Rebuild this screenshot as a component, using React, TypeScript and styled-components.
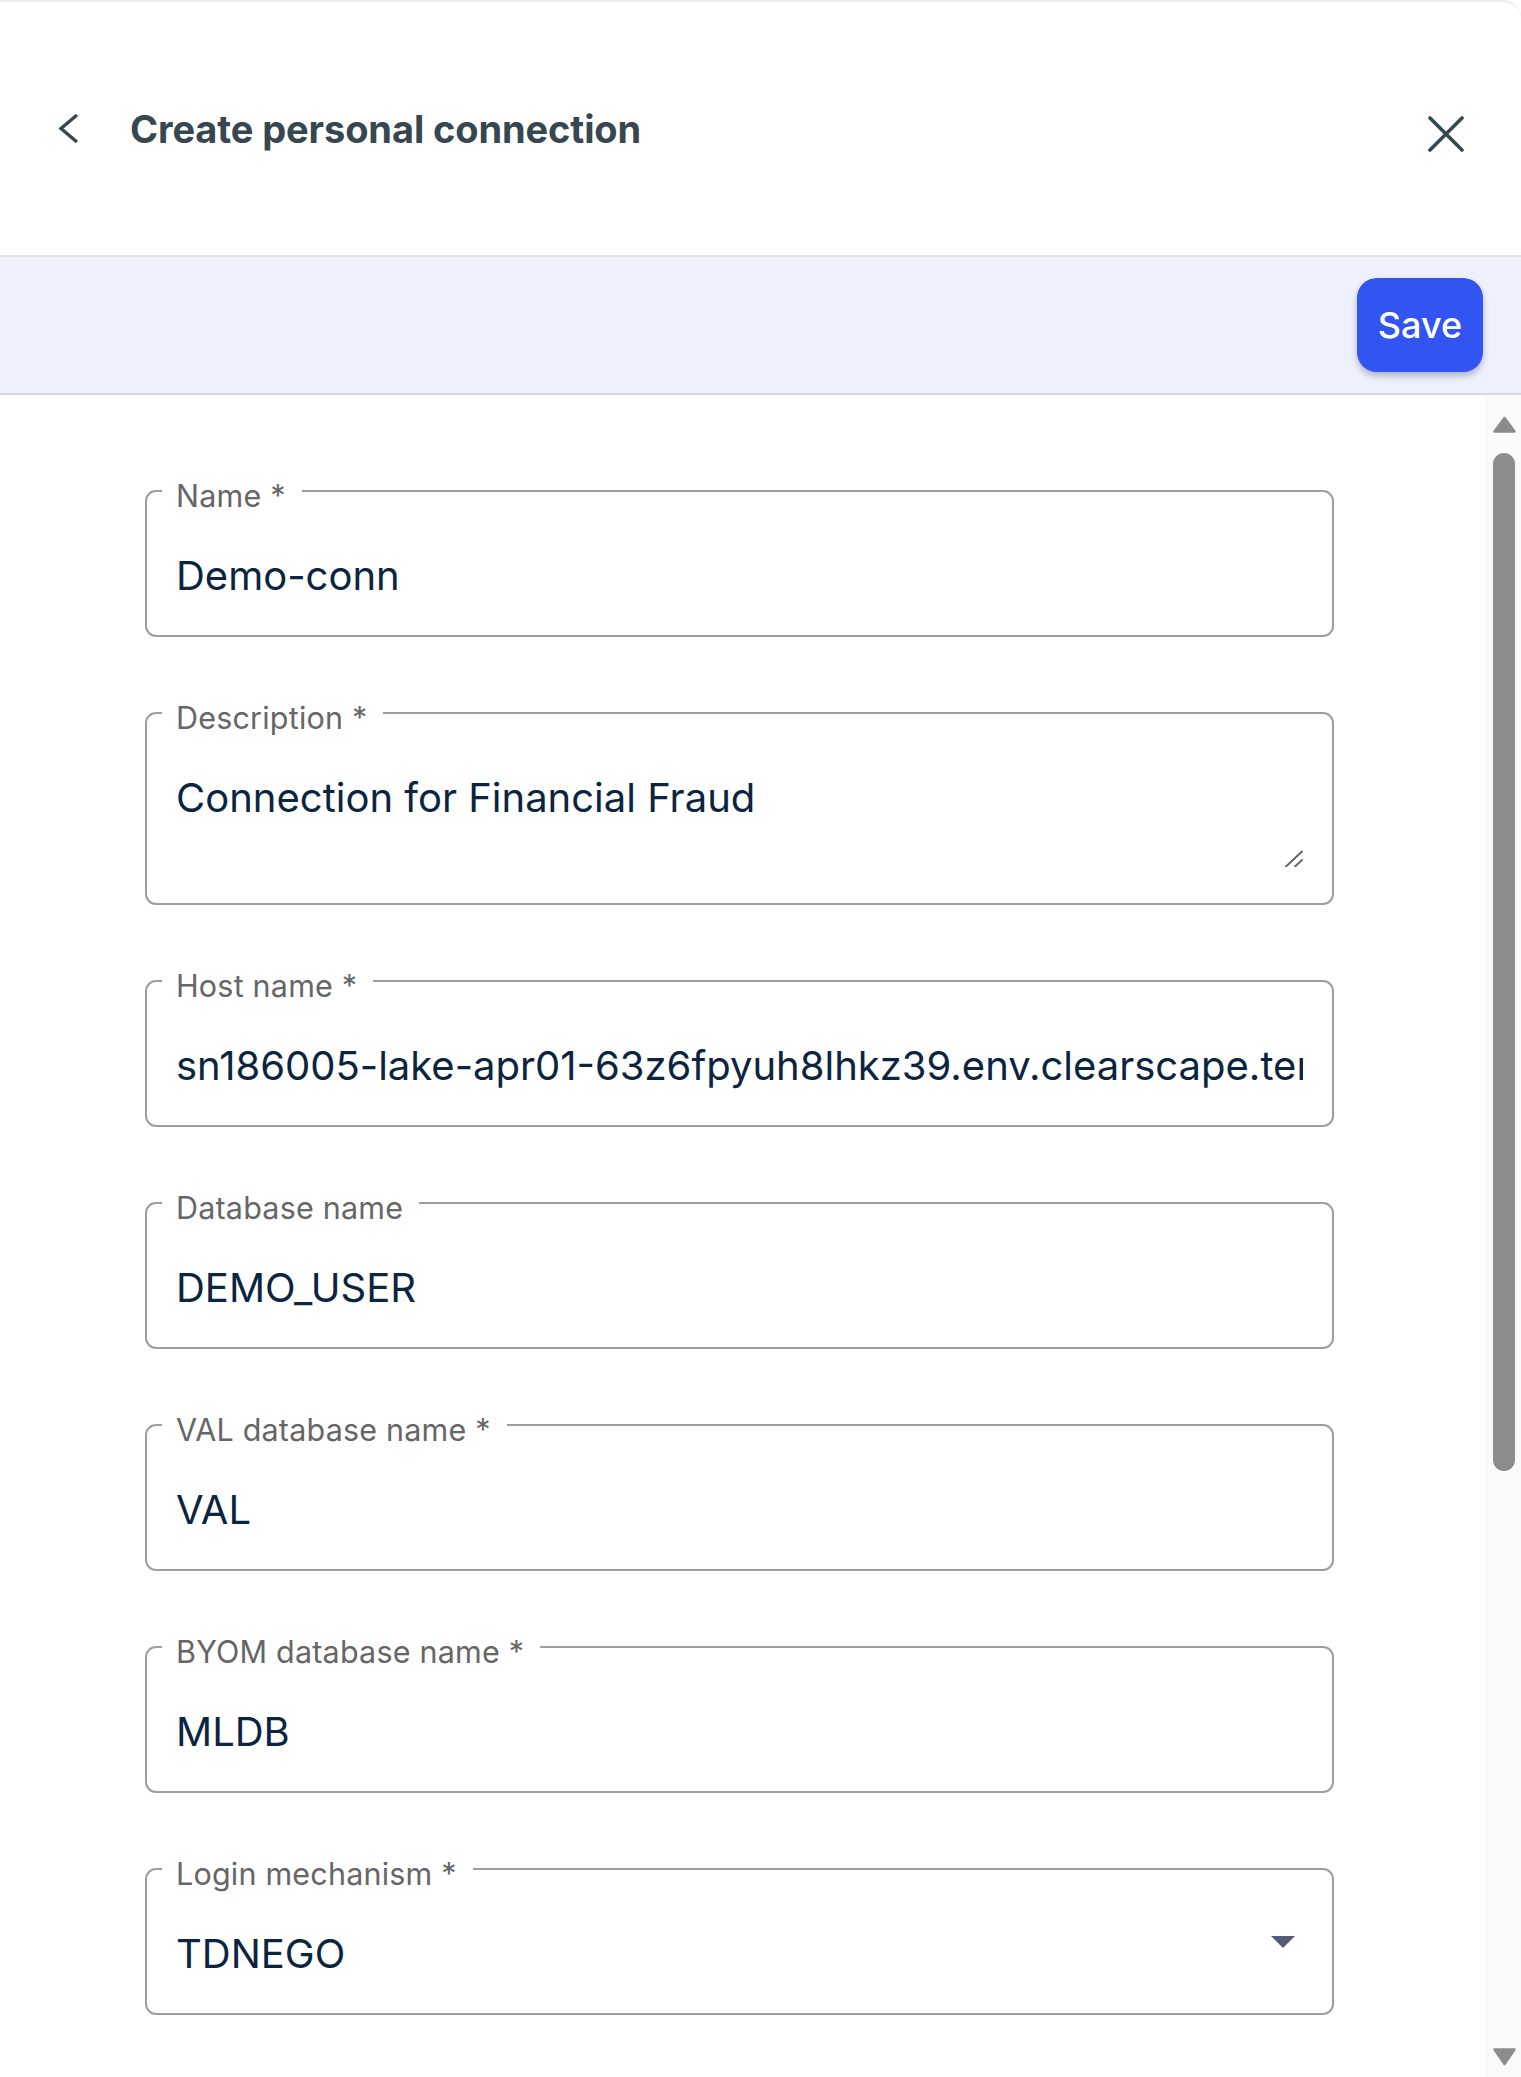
import React from "react";
import styled, { createGlobalStyle } from "styled-components";

const GlobalStyle = createGlobalStyle`
  html, body {
    margin: 0;
    padding: 0;
    background: #ffffff;
    overflow: hidden;
  }
  body {
    font-family: Inter, "Noto Sans", "Liberation Sans", sans-serif;
  }
  * { box-sizing: border-box; }
`;

const Page = styled.div`
  height: 100vh;
  display: flex;
  flex-direction: column;
  border-top: 2px solid #ebebeb;
  border-top-right-radius: 18px;
  background: #ffffff;
  overflow: hidden;
`;

const Header = styled.header`
  height: 255px;
  flex: none;
  display: flex;
  align-items: center;
  padding: 0 57px 0 58px;
  border-bottom: 2px solid #e2e2e2;
`;

const IconButton = styled.button<{ $offsetTop?: number }>`
  border: none;
  background: transparent;
  padding: 0;
  margin: ${(p) => (p.$offsetTop ? `${p.$offsetTop}px 0 0 0` : "0")};
  display: flex;
  align-items: center;
  justify-content: center;
  color: #37474f;
  cursor: pointer;
`;

const Title = styled.h1`
  margin: 0 0 0 50px;
  font-size: 38px;
  font-weight: 700;
  letter-spacing: -0.1px;
  color: #37474f;
  line-height: 1;
  flex: 1;
`;

const ActionBar = styled.div`
  height: 138px;
  flex: none;
  display: flex;
  align-items: center;
  justify-content: flex-end;
  padding: 0 38px;
  background: #eef0fc;
  border-bottom: 2px solid #d5d7e4;
`;

const SaveButton = styled.button`
  width: 126px;
  height: 94px;
  border: none;
  border-radius: 20px;
  background: #3254f1;
  color: #ffffff;
  font-family: Inter, "Noto Sans", sans-serif;
  font-size: 36px;
  font-weight: 500;
  box-shadow: 0 4px 6px rgba(30, 40, 90, 0.3);
  cursor: pointer;
`;

const Body = styled.div`
  flex: 1;
  min-height: 0;
  display: flex;
`;

const FormArea = styled.main`
  flex: 1;
  min-width: 0;
  overflow: hidden;
  padding: 76px 0 0 145px;
`;

const Form = styled.form`
  width: 1189px;
  display: flex;
  flex-direction: column;
  gap: 56px;
`;

const FieldSet = styled.fieldset`
  margin: 0;
  padding: 0 15px;
  border: 2px solid #9e9e9e;
  border-radius: 11px;
  min-width: 0;
`;

const Legend = styled.legend`
  padding: 10px 16px 0 14px;
  font-size: 30.5px;
  line-height: 30px;
  color: #666666;
  letter-spacing: 0.2px;
`;

const ValueBox = styled.div<{ $bottom: number }>`
  padding: 35px 14px ${(p) => p.$bottom}px;
  display: flex;
  flex-direction: column;
`;

const ValueRow = styled.div`
  display: flex;
  align-items: center;
  gap: 16px;
`;

const ValueText = styled.div`
  flex: 1;
  min-width: 0;
  font-size: 40px;
  line-height: 60px;
  color: #0b2540;
  white-space: nowrap;
  overflow: hidden;
`;

const GripRow = styled.div`
  display: flex;
  justify-content: flex-end;
  margin-top: 22px;
  height: 17px;
`;

const SelectArrow = styled.svg`
  flex: none;
  margin: 0 8px 24px 0;
`;

const ScrollTrack = styled.div`
  width: 36px;
  flex: none;
  background: #fafafa;
  display: flex;
  flex-direction: column;
  padding: 21px 5px 11px 8px;
`;

const Thumb = styled.div`
  width: 22px;
  height: 1018px;
  margin-top: 20px;
  border-radius: 11px;
  background: #8c8c8c;
`;

const TrackFill = styled.div`
  flex: 1;
`;

type FieldProps = {
  label: string;
  value: string;
  multiline?: boolean;
  select?: boolean;
};

const Field = ({ label, value, multiline, select }: FieldProps) => (
  <FieldSet>
    <Legend>{label}</Legend>
    <ValueBox $bottom={multiline ? 36 : 29}>
      <ValueRow>
        <ValueText>{value}</ValueText>
        {select && (
          <SelectArrow width="24" height="12" viewBox="0 0 24 12">
            <path d="M0 0 H24 L12 12 Z" fill="#545b74" />
          </SelectArrow>
        )}
      </ValueRow>
      {multiline && (
        <GripRow>
          <svg width="18" height="17" viewBox="0 0 18 17">
            <path d="M1 16.5 L17 1.5" stroke="#666" strokeWidth="2" strokeLinecap="round" />
            <path d="M10 16.5 L17 10" stroke="#666" strokeWidth="2" strokeLinecap="round" />
          </svg>
        </GripRow>
      )}
    </ValueBox>
  </FieldSet>
);

const fields: FieldProps[] = [
  { label: "Name *", value: "Demo-conn" },
  { label: "Description *", value: "Connection for Financial Fraud", multiline: true },
  { label: "Host name *", value: "sn186005-lake-apr01-63z6fpyuh8lhkz39.env.clearscape.teradata.com" },
  { label: "Database name", value: "DEMO_USER" },
  { label: "VAL database name *", value: "VAL" },
  { label: "BYOM database name *", value: "MLDB" },
  { label: "Login mechanism *", value: "TDNEGO", select: true },
];

export default function App() {
  return (
    <>
      <GlobalStyle />
      <Page>
        <Header>
          <IconButton aria-label="Back">
            <svg width="22" height="31" viewBox="0 0 22 31" fill="none">
              <polyline points="19,2 3,15.5 19,29" stroke="#37474f" strokeWidth="3.4" strokeLinejoin="miter" />
            </svg>
          </IconButton>
          <Title>Create personal connection</Title>
          <IconButton aria-label="Close" $offsetTop={10}>
            <svg width="36" height="36" viewBox="0 0 36 36" fill="none">
              <path d="M2 2 L34 34 M34 2 L2 34" stroke="#37474f" strokeWidth="3.6" strokeLinecap="round" />
            </svg>
          </IconButton>
        </Header>
        <ActionBar>
          <SaveButton type="button">Save</SaveButton>
        </ActionBar>
        <Body>
          <FormArea>
            <Form>
              {fields.map((f) => (
                <Field key={f.label} {...f} />
              ))}
            </Form>
          </FormArea>
          <ScrollTrack>
            <svg width="23" height="17" viewBox="0 0 23 17">
              <path d="M11.5 2 L21.5 15.5 H1.5 Z" fill="#8c8c8c" stroke="#8c8c8c" strokeWidth="2.5" strokeLinejoin="round" />
            </svg>
            <Thumb />
            <TrackFill />
            <svg width="23" height="18" viewBox="0 0 23 18">
              <path d="M1.5 1.5 H21.5 L11.5 16 Z" fill="#8c8c8c" stroke="#8c8c8c" strokeWidth="2.5" strokeLinejoin="round" />
            </svg>
          </ScrollTrack>
        </Body>
      </Page>
    </>
  );
}
